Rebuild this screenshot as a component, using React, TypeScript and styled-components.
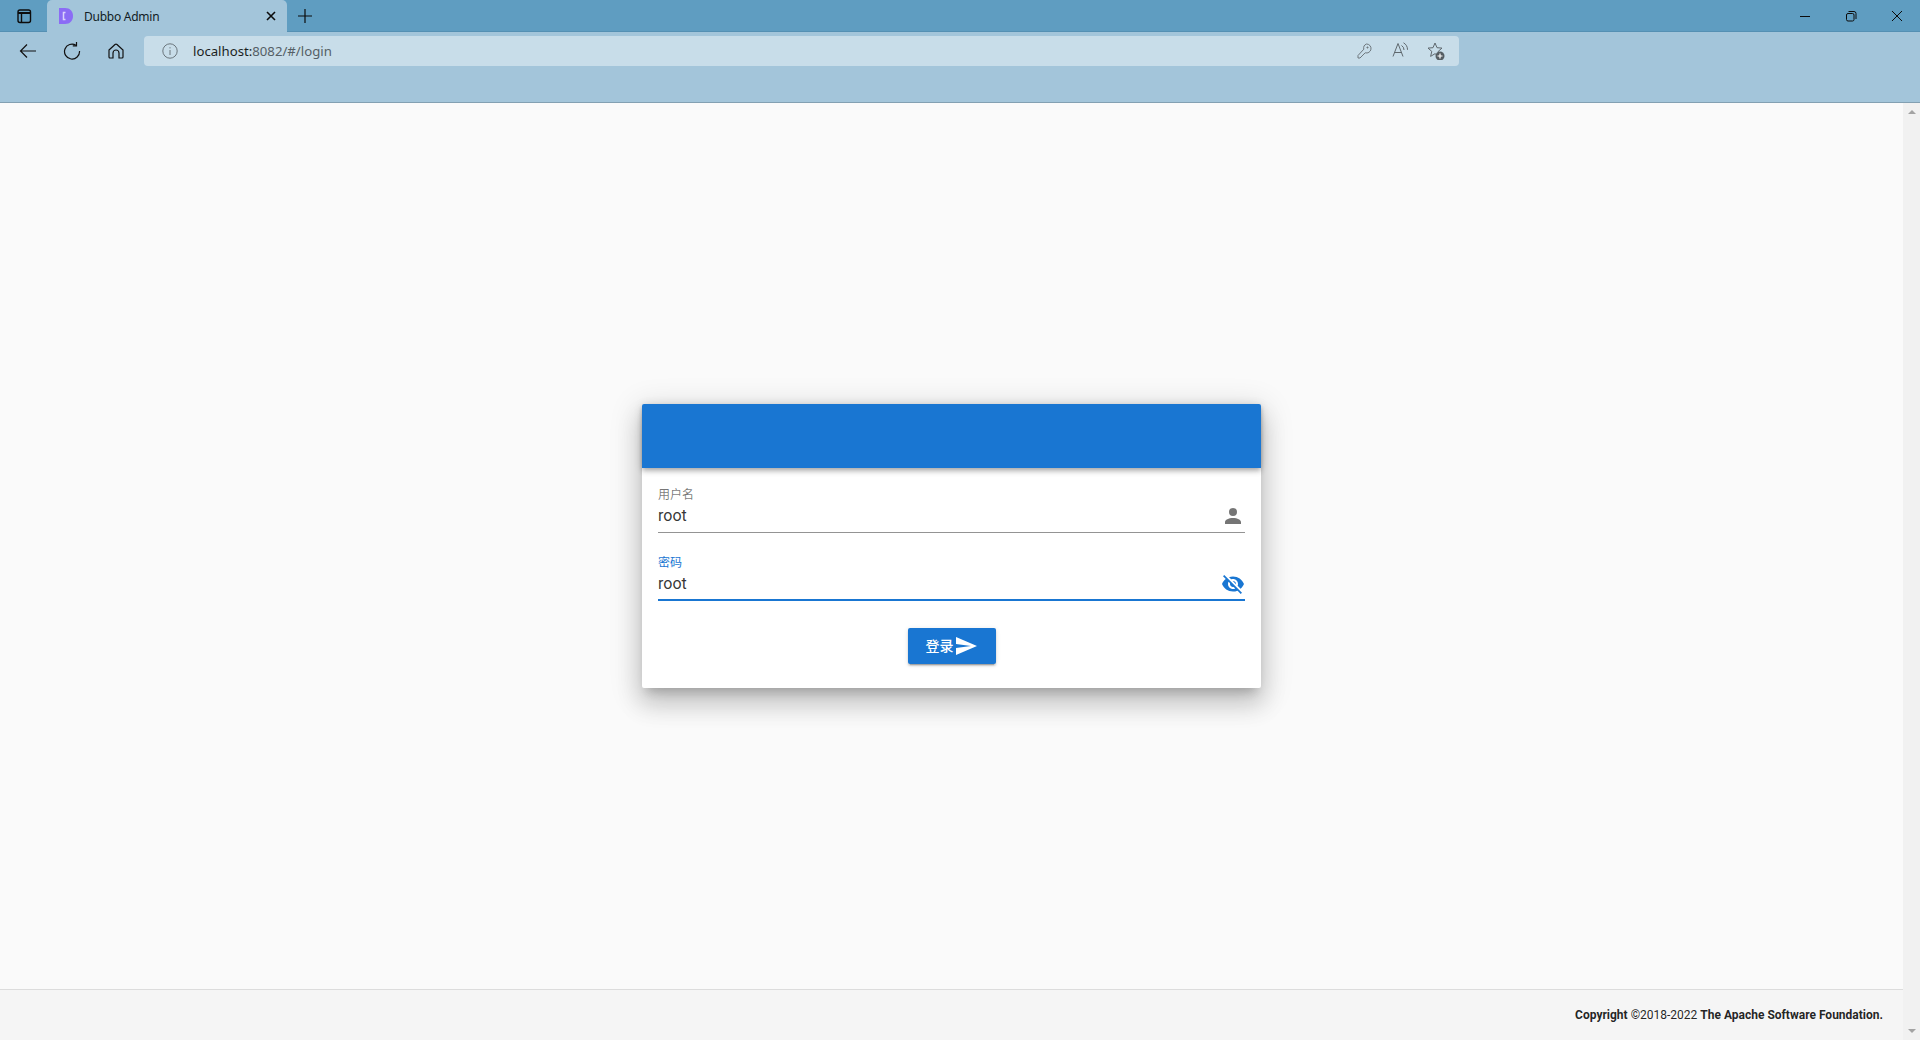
import React from "react";
import styled, { createGlobalStyle } from "styled-components";

const Global = createGlobalStyle`
  html, body { margin: 0; padding: 0; height: 100%; overflow: hidden; }
  #root { height: 100%; }
  * { box-sizing: border-box; }
`;

const Windows = styled.div`
  width: 1920px;
  height: 1040px;
  display: flex;
  flex-direction: column;
  font-family: "Noto Sans", "Noto Sans CJK SC", sans-serif;
  background: #fafafa;
`;

const TabStrip = styled.div`
  height: 32px;
  flex: none;
  background: #5f9dc1;
  border-bottom: 1px solid #5590b3;
  display: flex;
  align-items: flex-start;
`;

const StripButton = styled.div`
  width: 47px;
  height: 32px;
  display: flex;
  align-items: center;
  justify-content: center;
  flex: none;
  color: #0c0c0c;
`;

const Tab = styled.div`
  width: 240px;
  height: 32px;
  flex: none;
  background: #a3c5da;
  border-radius: 5px 5px 0 0;
  display: flex;
  align-items: center;
  padding: 0 8px 0 12px;
  gap: 11px;
  font-size: 12px;
  color: #111c24;
`;

const TabTitle = styled.span`
  flex: 1;
  letter-spacing: -0.25px;
`;

const NewTab = styled.div`
  width: 36px;
  height: 32px;
  flex: none;
  display: flex;
  align-items: center;
  justify-content: center;
`;

const StripSpacer = styled.div`
  flex: 1;
`;

const WindowButton = styled.div`
  width: 46px;
  height: 32px;
  display: flex;
  align-items: center;
  justify-content: center;
`;

const Toolbar = styled.div`
  height: 71px;
  flex: none;
  background: #a3c5da;
  border-bottom: 1px solid #83a0b2;
  display: flex;
  align-items: flex-start;
  padding: 4px 0 0 6px;
`;

const NavButton = styled.div`
  width: 44px;
  height: 30px;
  flex: none;
  display: flex;
  align-items: center;
  justify-content: center;
`;

const AddressBar = styled.div`
  width: 1315px;
  height: 30px;
  margin-left: 6px;
  background: #c8dde9;
  border-radius: 4px;
  display: flex;
  align-items: center;
  padding-left: 18px;
  font-size: 13.2px;
`;

const UrlHost = styled.span`
  color: #1b1f22;
  margin-left: 15px;
`;

const UrlRest = styled.span`
  color: #555f66;
`;

const AddressActions = styled.div`
  margin-left: auto;
  display: flex;
  align-items: center;
  padding-right: 5px;
`;

const ActionSlot = styled.div`
  width: 36px;
  height: 30px;
  display: flex;
  align-items: center;
  justify-content: center;
`;

const Viewport = styled.div`
  flex: 1;
  min-height: 0;
  display: flex;
`;

const Page = styled.div`
  flex: 1;
  display: flex;
  flex-direction: column;
  min-width: 0;
`;

const Center = styled.main`
  flex: 1;
  display: flex;
  align-items: center;
  justify-content: center;
`;

const Card = styled.div`
  width: 619px;
  height: 284px;
  background: #fff;
  border-radius: 2px;
  display: flex;
  flex-direction: column;
  box-shadow: 0 8px 10px -5px rgba(0,0,0,.2), 0 16px 24px 2px rgba(0,0,0,.14), 0 6px 30px 5px rgba(0,0,0,.12);
`;

const CardHeader = styled.div`
  height: 64px;
  flex: none;
  background: #1976d2;
  border-radius: 2px 2px 0 0;
  box-shadow: 0 2px 4px -1px rgba(0,0,0,.2), 0 4px 5px 0 rgba(0,0,0,.14), 0 1px 10px 0 rgba(0,0,0,.12);
`;

const Form = styled.div`
  padding: 18px 16px 0;
  display: flex;
  flex-direction: column;
  gap: 21px;
`;

const Field = styled.div`
  display: flex;
  flex-direction: column;
  height: 47px;
`;

const FieldLabel = styled.label<{ $active?: boolean }>`
  font-size: 12px;
  height: 18px;
  line-height: 18px;
  color: ${(p) => (p.$active ? "#1976d2" : "rgba(0,0,0,.54)")};
`;

const FieldRow = styled.div<{ $active?: boolean }>`
  height: 29px;
  flex: none;
  display: flex;
  align-items: flex-start;
  justify-content: space-between;
  border-bottom: ${(p) => (p.$active ? "2px solid #1976d2" : "1px solid #949494")};
`;

const FieldValue = styled.span`
  font-family: Roboto, sans-serif;
  font-size: 16px;
  line-height: 24px;
  color: rgba(0,0,0,.8);
`;

const FieldIcon = styled.svg<{ $active?: boolean }>`
  width: 24px;
  height: 24px;
  fill: ${(p) => (p.$active ? "#1976d2" : "rgba(0,0,0,.54)")};
  display: block;
`;

const Actions = styled.div`
  display: flex;
  justify-content: center;
  margin-top: 27px;
`;

const LoginButton = styled.button`
  width: 88px;
  height: 36px;
  border: 0;
  border-radius: 2px;
  background: #1976d2;
  color: #fff;
  font-family: Roboto, "Noto Sans CJK SC", sans-serif;
  font-size: 14px;
  font-weight: 500;
  display: flex;
  align-items: center;
  justify-content: center;
  padding: 0;
  box-shadow: 0 3px 1px -2px rgba(0,0,0,.2), 0 2px 2px 0 rgba(0,0,0,.14), 0 1px 5px 0 rgba(0,0,0,.12);
`;

const ButtonLabel = styled.span`
  margin-bottom: 2px;
`;

const SendIcon = styled.svg`
  width: 24px;
  height: 24px;
  fill: #fff;
  display: block;
`;

const Footer = styled.footer`
  height: 51px;
  flex: none;
  background: #f5f5f5;
  border-top: 1px solid #dcdcdc;
  display: flex;
  align-items: center;
  justify-content: flex-end;
  padding: 0 20px 0 0;
  font-family: Roboto, sans-serif;
  font-size: 12px;
  color: rgba(0,0,0,.87);
`;

const Strong = styled.b`
  font-weight: 700;
`;

const Scrollbar = styled.div`
  width: 17px;
  flex: none;
  background: #f1f1f1;
  display: flex;
  flex-direction: column;
  justify-content: space-between;
  align-items: center;
  padding: 7px 0 7px;
`;

const Arrow = styled.div<{ $down?: boolean }>`
  width: 0;
  height: 0;
  border-left: 4px solid transparent;
  border-right: 4px solid transparent;
  ${(p) => (p.$down ? "border-top: 4px solid #a3a3a3;" : "border-bottom: 4px solid #a3a3a3;")}
`;

const stroke = { fill: "none", stroke: "currentColor" };

export default function App() {
  return (
    <Windows>
      <Global />
      <TabStrip>
        <StripButton>
          <svg width="16" height="16" viewBox="0 0 16 16" {...stroke} strokeWidth={1.4}>
            <rect x="2" y="2" width="12.5" height="12.5" rx="2" />
            <path d="M2 5h12.5" strokeWidth={2} />
            <path d="M5.5 5v9.5" />
          </svg>
        </StripButton>
        <Tab>
          <svg width="14" height="16" viewBox="0 0 14 16">
            <path d="M0 0h6c5 0 8 3.500 8 8s-3 8-8 8H0z" fill="#8b6cf5" />
            <path d="M6.500 4.500H4.500v7H6.500" fill="none" stroke="#d9d2fc" strokeWidth="1.500" />
          </svg>
          <TabTitle>Dubbo Admin</TabTitle>
          <svg width="16" height="16" viewBox="0 0 16 16" stroke="#0c0c0c" strokeWidth="1.600">
            <path d="M4 4l8 8M12 4l-8 8" />
          </svg>
        </Tab>
        <NewTab>
          <svg width="16" height="16" viewBox="0 0 16 16" stroke="#0c0c0c" strokeWidth="1.200">
            <path d="M8 1v14M1 8h14" />
          </svg>
        </NewTab>
        <StripSpacer />
        <WindowButton>
          <svg width="12" height="12" viewBox="0 0 12 12" stroke="#0c0c0c" strokeWidth="1">
            <path d="M1 6.500h10" />
          </svg>
        </WindowButton>
        <WindowButton>
          <svg width="12" height="12" viewBox="0 0 12 12" fill="none" stroke="#0c0c0c" strokeWidth="1">
            <rect x="1.500" y="3.500" width="7.500" height="7.500" rx="1.500" />
            <path d="M3.500 1.500h5.500a2 2 0 0 1 2 2v5.500" />
          </svg>
        </WindowButton>
        <WindowButton>
          <svg width="12" height="12" viewBox="0 0 12 12" stroke="#0c0c0c" strokeWidth="1">
            <path d="M1 1l10 10M11 1L1 11" />
          </svg>
        </WindowButton>
      </TabStrip>
      <Toolbar>
        <NavButton>
          <svg width="18" height="18" viewBox="0 0 18 18" fill="none" stroke="#111" strokeWidth="1.200">
            <path d="M17 9H1.500M8 2.500L1.500 9 8 15.500" />
          </svg>
        </NavButton>
        <NavButton>
          <svg width="18" height="18" viewBox="0 0 18 18" fill="none" stroke="#111" strokeWidth="1.200">
            <path d="M13 3.200A7.500 7.500 0 1 0 16.500 9" />
            <path d="M13.500 0v3.800H9.800" />
          </svg>
        </NavButton>
        <NavButton>
          <svg width="16" height="16" viewBox="0 0 16 16" fill="none" stroke="#111" strokeWidth="1.200">
            <path d="M1 7l6-5.500a1.500 1.500 0 0 1 2 0L15 7v7a1 1 0 0 1-1 1h-3v-5a2.500 2.500 0 0 0-6 0v5H2a1 1 0 0 1-1-1z" />
          </svg>
        </NavButton>
        <AddressBar>
          <svg width="16" height="16" viewBox="0 0 16 16" fill="none" stroke="#6b767d" strokeWidth="1">
            <circle cx="8" cy="8" r="7.200" />
            <path d="M8 7v5M8 4.200v1.200" />
          </svg>
          <UrlHost>localhost:</UrlHost>
          <UrlRest>8082/#/login</UrlRest>
          <AddressActions>
            <ActionSlot>
              <svg width="16" height="16" viewBox="0 0 16 16" fill="none" stroke="#6e777d" strokeWidth="1">
                <path d="M10.500 1a4.500 4.500 0 1 1-1.300 8.800L4 15H2v-2.500l5.800-6.300A4.500 4.500 0 0 1 10.500 1z" />
                <circle cx="11.500" cy="4.500" r=".6" fill="#6e777d" />
              </svg>
            </ActionSlot>
            <ActionSlot>
              <svg width="20" height="18" viewBox="0 0 20 18" fill="none" stroke="#5f686e" strokeWidth="1">
                <path d="M3 14.500L8 1.500l5 13M4.500 10.500h7" />
                <path d="M11.500 3.500a5 5 0 0 1 2.500 4.500M13.500 .8a8 8 0 0 1 4 7" />
              </svg>
            </ActionSlot>
            <ActionSlot>
              <svg width="18" height="18" viewBox="0 0 18 18">
                <path d="M8 1l2 4.700 5 .4-3.800 3.300 1.200 5L8 11.700l-4.400 2.700 1.200-5L1 6.100l5-.4z" fill="none" stroke="#5f686e" strokeWidth="1" />
                <circle cx="13" cy="14" r="4.500" fill="#555d62" />
                <path d="M13 11.500v5M10.500 14h5" stroke="#fff" strokeWidth="1.200" />
              </svg>
            </ActionSlot>
          </AddressActions>
        </AddressBar>
      </Toolbar>
      <Viewport>
        <Page>
          <Center>
            <Card>
              <CardHeader />
              <Form>
                <Field>
                  <FieldLabel>用户名</FieldLabel>
                  <FieldRow>
                    <FieldValue>root</FieldValue>
                    <FieldIcon viewBox="0 0 24 24">
                      <path d="M12 4a4 4 0 1 1 0 8 4 4 0 0 1 0-8zm0 10c4.420 0 8 1.790 8 4v2H4v-2c0-2.210 3.580-4 8-4z" />
                    </FieldIcon>
                  </FieldRow>
                </Field>
                <Field>
                  <FieldLabel $active>密码</FieldLabel>
                  <FieldRow $active>
                    <FieldValue>root</FieldValue>
                    <FieldIcon $active viewBox="0 0 24 24">
                      <path d="M12 7c2.760 0 5 2.240 5 5 0 .65-.13 1.260-.36 1.830l2.920 2.920c1.510-1.260 2.700-2.890 3.430-4.750-1.730-4.390-6-7.500-11-7.500-1.400 0-2.740.25-3.980.7l2.160 2.160C10.740 7.130 11.350 7 12 7zM2 4.270l2.280 2.280.46.46C3.080 8.300 1.780 10.020 1 12c1.730 4.390 6 7.500 11 7.500 1.550 0 3.030-.3 4.380-.84l.42.42L19.730 22 21 20.730 3.270 3 2 4.270zM7.530 9.800l1.550 1.550c-.05.21-.08.43-.08.65 0 1.660 1.340 3 3 3 .22 0 .44-.03.65-.08l1.550 1.550c-.67.33-1.410.53-2.200.53-2.760 0-5-2.240-5-5 0-.79.2-1.530.53-2.200zm4.310-.78l3.150 3.150.02-.16c0-1.660-1.340-3-3-3l-.17.01z" />
                    </FieldIcon>
                  </FieldRow>
                </Field>
              </Form>
              <Actions>
                <LoginButton>
                  <ButtonLabel>登录</ButtonLabel>
                  <SendIcon viewBox="0 0 24 24">
                    <path d="M2 21l21-9L2 3v7l15 2-15 2z" />
                  </SendIcon>
                </LoginButton>
              </Actions>
            </Card>
          </Center>
          <Footer>
            <span>
              <Strong>Copyright</Strong> ©2018-2022 <Strong>The Apache Software Foundation.</Strong>
            </span>
          </Footer>
        </Page>
        <Scrollbar>
          <Arrow />
          <Arrow $down />
        </Scrollbar>
      </Viewport>
    </Windows>
  );
}
